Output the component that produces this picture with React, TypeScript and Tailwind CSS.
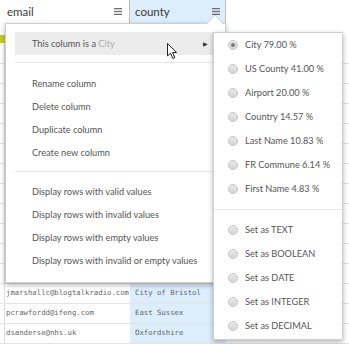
import React from 'react';

// rows sitting under the open menu: only their grid lines show
const hiddenRowCount = 12;

const visibleRows = [
  ['jmarshallc@blogtalkradio.com', 'City of Bristol'],
  ['pcrawfordd@ifeng.com', 'East Sussex'],
  ['dsanderse@nhs.uk', 'Oxfordshire'],
];

const columnActions = ['Rename column', 'Delete column', 'Duplicate column', 'Create new column'];
const filterActions = [
  'Display rows with valid values',
  'Display rows with invalid values',
  'Display rows with empty values',
  'Display rows with invalid or empty values',
];
const semanticTypes = [
  'City 79.00 %',
  'US County 41.00 %',
  'Airport 20.00 %',
  'Country 14.57 %',
  'Last Name 10.83 %',
  'FR Commune 6.14 %',
  'First Name 4.83 %',
];
const primitiveTypes = ['Set as TEXT', 'Set as BOOLEAN', 'Set as DATE', 'Set as INTEGER', 'Set as DECIMAL'];

function MenuIcon() {
  return (
    <svg width="8" height="7" viewBox="0 0 8 7" className="shrink-0">
      <rect x="0" y="0" width="8" height="1.3" fill="#707070" />
      <rect x="0" y="2.85" width="8" height="1.3" fill="#707070" />
      <rect x="0" y="5.7" width="8" height="1.3" fill="#707070" />
    </svg>
  );
}

function Radio({ checked }: { checked?: boolean }) {
  return (
    <span className="w-[10px] h-[10px] rounded-full border border-[#c4c4c4] bg-gradient-to-b from-[#e9e9e9] to-[#d6d6d6] flex items-center justify-center shrink-0">
      {checked && <span className="w-[4px] h-[4px] rounded-full bg-[#7a7a7a]" />}
    </span>
  );
}

function Row({ email, county }: { email?: string; county?: string }) {
  return (
    <div className="flex h-[20px] border-b border-[#e4e4e4] font-['DejaVu_Sans_Mono',monospace] text-[7.3px] text-[#666]">
      <div className="w-[5px] border-r border-[#dcdcdc]" />
      <div className="w-[125px] pl-[1px] flex items-center overflow-hidden whitespace-nowrap">{email}</div>
      <div className="w-[96px] pl-[5px] flex items-center bg-[#dcedfb] whitespace-nowrap overflow-hidden">{county}</div>
    </div>
  );
}

export default function App() {
  return (
    <div className="relative w-[349px] h-[344px] overflow-hidden bg-white font-['Lato',sans-serif]">
      {/* data grid */}
      <div className="flex flex-col">
        <div className="flex h-[23px] text-[11.5px] text-[#3a3a3a]">
          <div className="w-[5px]" />
          <div className="w-[125px] flex items-center justify-between pl-[2px] pr-[7px] border-r border-[#bdbdbd]">
            <span>email</span>
            <MenuIcon />
          </div>
          <div className="w-[96px] flex items-center justify-between pl-[5px] pr-[5px] bg-[#dcedfb] border-r border-[#bdbdbd]">
            <span>county</span>
            <MenuIcon />
          </div>
        </div>
        <div className="h-[12px]" />
        <div className="flex h-[8px]">
          <div className="w-[5px] bg-[#c2cf1c]" />
          <div className="w-[125px] bg-[#c2cf1c]" />
          <div className="w-[96px] bg-[#c2cf1c]" />
        </div>
        <div className="h-[1px]" />
        {Array.from({ length: hiddenRowCount }).map((_, i) => (
          <Row key={i} />
        ))}
        {visibleRows.map(([e, c]) => (
          <Row key={e} email={e} county={c} />
        ))}
      </div>

      {/* column menu */}
      <div className="absolute left-[5px] top-[23px] w-[221px] h-[260px] bg-white border border-[#cfcfcf] shadow-[0_2px_5px_rgba(0,0,0,0.3)] pl-[9px] py-[8px] text-[9.2px] text-[#555]">
        <div className="h-[23px] flex items-center justify-between pl-[17px] pr-[17px] bg-[#ececec]">
          <span>
            This column is a <span className="text-[#aaa]">City</span>
          </span>
          <span className="text-[6px] text-[#333]">▶</span>
        </div>
        <div className="mt-[7px] mb-[9px] h-px bg-[#e6e6e6]" />
        {columnActions.map((a) => (
          <div key={a} className="h-[23px] flex items-center pl-[17px]">
            {a}
          </div>
        ))}
        <div className="mt-[7px] mb-[8px] h-px bg-[#e6e6e6]" />
        {filterActions.map((a) => (
          <div key={a} className="h-[23px] flex items-center pl-[17px]">
            {a}
          </div>
        ))}
      </div>

      {/* caret pointing to the county menu icon */}
      <svg className="absolute left-[207px] top-[14px]" width="16" height="10" viewBox="0 0 16 10">
        <path d="M0 10 L8 1 L16 10 Z" fill="#fff" />
        <path d="M0 9.5 L8 1 L16 9.5" fill="none" stroke="#cfcfcf" strokeWidth="1" />
      </svg>

      {/* type submenu */}
      <div className="absolute left-[213px] top-[32px] w-[130px] h-[308px] bg-white border border-[#cfcfcf] shadow-[0_2px_5px_rgba(0,0,0,0.3)] text-[9.2px] text-[#555]">
        {semanticTypes.map((t, i) => (
          <div key={t} className="h-[24px] flex items-center gap-[7px] pl-[14px] whitespace-nowrap">
            <Radio checked={i === 0} />
            <span>{t}</span>
          </div>
        ))}
        <div className="mt-[8px] mb-[8px] h-px bg-[#e6e6e6]" />
        {primitiveTypes.map((t) => (
          <div key={t} className="h-[24px] flex items-center gap-[7px] pl-[14px] whitespace-nowrap">
            <Radio />
            <span>{t}</span>
          </div>
        ))}
      </div>

      {/* mouse pointer */}
      <svg className="absolute left-[167px] top-[43px]" width="12" height="17" viewBox="0 0 12 17">
        <path
          d="M0.5 0.5 L0.5 13 L3.5 10.2 L5.8 15.5 L7.8 14.6 L5.6 9.5 L9.6 9.5 Z"
          fill="#fff"
          stroke="#222"
          strokeWidth="1"
          strokeLinejoin="round"
        />
      </svg>
    </div>
  );
}
